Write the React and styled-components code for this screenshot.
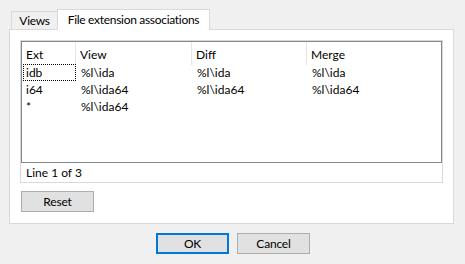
import React from "react";
import styled, { createGlobalStyle } from "styled-components";

const GlobalStyle = createGlobalStyle`
  html, body {
    margin: 0;
    padding: 0;
    background: #f0f0f0;
  }
  body {
    font-family: Lato, "Liberation Sans", Arial, sans-serif;
    font-size: 12px;
    color: #000;
  }
`;

const columns = [
  { title: "Ext", width: 54 },
  { title: "View", width: 116 },
  { title: "Diff", width: 115 },
  { title: "Merge", width: 134 },
];

const rows = [
  ["idb", "%l\\ida", "%l\\ida", "%l\\ida"],
  ["i64", "%l\\ida64", "%l\\ida64", "%l\\ida64"],
  ["*", "%l\\ida64", "", ""],
];

const App = () => {
  return (
    <Dialog>
      <GlobalStyle />
      <TabStrip>
        <Tab>Views</Tab>
        <Tab $active>File extension associations</Tab>
      </TabStrip>
      <Panel>
        <ListFrame>
          <ListView>
            <Header>
              {columns.map((c, j) => (
                <HeadCell key={c.title} $w={c.width} $first={j === 0}>
                  {c.title}
                </HeadCell>
              ))}
            </Header>
            {rows.map((r, i) => (
              <Row key={i} $first={i === 0}>
                {r.map((cell, j) => (
                  <Cell key={j} $w={columns[j].width} $first={j === 0} $focused={i === 0 && j === 0}>
                    {cell}
                  </Cell>
                ))}
              </Row>
            ))}
          </ListView>
          <Status>Line 1 of 3</Status>
        </ListFrame>
        <Button $reset>Reset</Button>
      </Panel>
      <Footer>
        <Button $primary>OK</Button>
        <Button>Cancel</Button>
      </Footer>
    </Dialog>
  );
};

const Dialog = styled.div`
  width: 465px;
  height: 264px;
  box-sizing: border-box;
  padding: 9px 0 0 9px;
  overflow: hidden;
`;

const TabStrip = styled.div`
  display: flex;
  align-items: flex-end;
  height: 20px;
  padding-left: 2px;
`;

const Tab = styled.div`
  box-sizing: border-box;
  position: relative;
  z-index: ${(p) => (p.$active ? 1 : 0)};
  height: ${(p) => (p.$active ? "21px" : "18px")};
  margin-bottom: ${(p) => (p.$active ? "-1px" : "0")};
  margin-left: ${(p) => (p.$active ? "-1px" : "0")};
  padding-top: ${(p) => (p.$active ? "0" : "1px")};
  width: ${(p) => (p.$active ? "153px" : "47px")};
  border: 1px solid #d9d9d9;
  border-bottom: none;
  background: ${(p) => (p.$active ? "#fff" : "#f0f0f0")};
  display: flex;
  align-items: center;
  justify-content: center;
  line-height: 1;
  letter-spacing: -0.3px;
  white-space: nowrap;
`;

const Panel = styled.div`
  box-sizing: border-box;
  width: 445px;
  height: 195px;
  border: 1px solid #d9d9d9;
  background: #fff;
  padding: 10px 0 0 10px;
  display: flex;
  flex-direction: column;
  align-items: flex-start;
`;

const ListFrame = styled.div`
  box-sizing: border-box;
  width: 423px;
  height: 143px;
  border: 1px solid #d9d9d9;
  display: flex;
  flex-direction: column;
  margin-bottom: 8px;
`;

const ListView = styled.div`
  box-sizing: border-box;
  height: 122px;
  margin: 0 0 0 0;
  border: 1px solid #828790;
  overflow: hidden;
`;

const Header = styled.div`
  display: flex;
  height: 22px;
`;

const HeadCell = styled.div`
  box-sizing: border-box;
  width: ${(p) => p.$w}px;
  height: 23px;
  padding: 1px 0 0 ${(p) => (p.$first ? 4 : 4)}px;
  border-right: 1px solid #e5e5e5;
  display: flex;
  align-items: center;
  &:last-child {
    border-right: none;
  }
`;

const Row = styled.div`
  display: flex;
  height: 17px;
  margin-top: ${(p) => (p.$first ? "0" : "0")};
`;

const Cell = styled.div`
  box-sizing: border-box;
  width: ${(p) => (p.$first ? p.$w - 1 : p.$w)}px;
  margin-left: ${(p) => (p.$first ? "1px" : "0")};
  height: 17px;
  line-height: 15px;
  padding-left: ${(p) => (p.$first ? 2 : 4)}px;
  white-space: nowrap;
  border: 1px dotted ${(p) => (p.$focused ? "#000" : "transparent")};
`;

const Status = styled.div`
  flex: 1;
  display: flex;
  align-items: center;
  padding-left: 5px;
`;

const Button = styled.button`
  box-sizing: border-box;
  width: 73px;
  height: 21px;
  margin-left: ${(p) => (p.$reset ? "1px" : "0")};
  font: inherit;
  color: #000;
  letter-spacing: -0.2px;
  background: #e1e1e1;
  border: ${(p) => (p.$primary ? "2px solid #0078d7" : "1px solid #adadad")};
  padding: 0;
  border-radius: 0;
`;

const Footer = styled.div`
  display: flex;
  gap: 8px;
  margin-top: 9px;
  padding-left: 147px;
`;

export default App;
